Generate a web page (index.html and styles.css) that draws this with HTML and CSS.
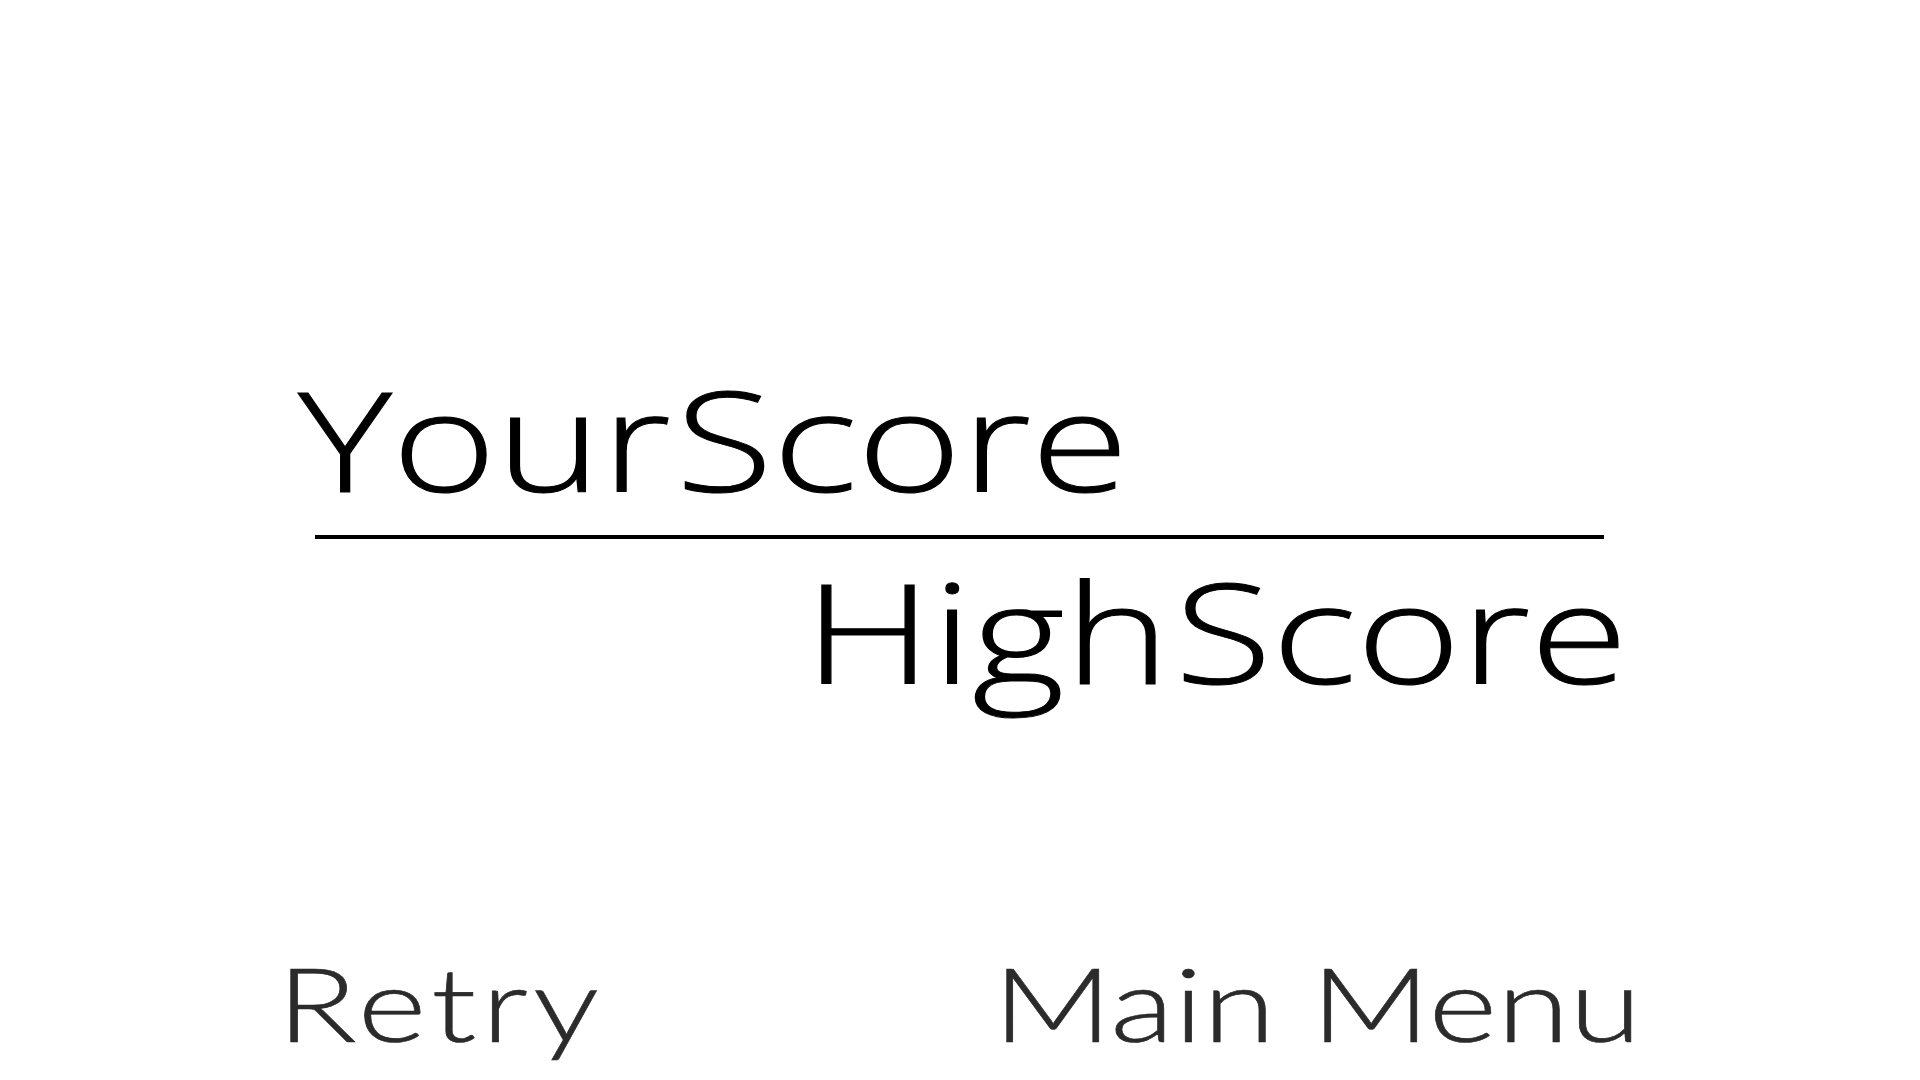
FILE: index.html
```html
<!DOCTYPE html>
<html lang="en">
<head>
<meta charset="utf-8">
<title>Game Over</title>
<link rel="stylesheet" href="styles.css">
</head>
<body>
<main class="screen">
  <section class="scores">
    <div class="your-score"><span class="big">Your Score</span></div>
    <div class="divider"></div>
    <div class="high-score"><span class="big">High Score</span></div>
  </section>
  <nav class="menu">
    <div class="slot"><span class="btn retry">Retry</span></div>
    <div class="slot"><span class="btn main-menu">Main Menu</span></div>
  </nav>
</main>
</body>
</html>
```

FILE: styles.css
```css
html, body {
  margin: 0;
  padding: 0;
  background: #ffffff;
}
.screen {
  width: 1920px;
  height: 1080px;
  display: flex;
  flex-direction: column;
  overflow: hidden;
}
.scores {
  padding-top: 369px;
  display: flex;
  flex-direction: column;
}
.big {
  font-family: "Open Sans", sans-serif;
  font-weight: 300;
  font-size: 138px;
  line-height: 138px;
  color: #000;
  -webkit-text-stroke: 1px #000;
  white-space: nowrap;
  display: inline-block;
  word-spacing: -32px;
  transform: scaleX(1.29);
  transform-origin: left center;
}
.your-score {
  padding-left: 298px;
  height: 138px;
}
.divider {
  margin: 28px 0 0 315px;
  width: 1289px;
  height: 4px;
  background: #000;
}
.high-score {
  margin-top: 22px;
  padding-left: 804px;
  height: 138px;
}
.menu {
  margin-top: 252px;
  padding-left: 277px;
  display: grid;
  grid-template-columns: 716px 1fr;
  font-family: "Lato", sans-serif;
  font-weight: 300;
  font-size: 103px;
  line-height: 103px;
  color: #2b2b2b;
}
.btn {
  display: inline-block;
  white-space: nowrap;
  -webkit-text-stroke: 0.6px #2b2b2b;
  transform: scaleX(1.277);
  transform-origin: left center;
}
.retry {
  letter-spacing: 4px;
}
```
